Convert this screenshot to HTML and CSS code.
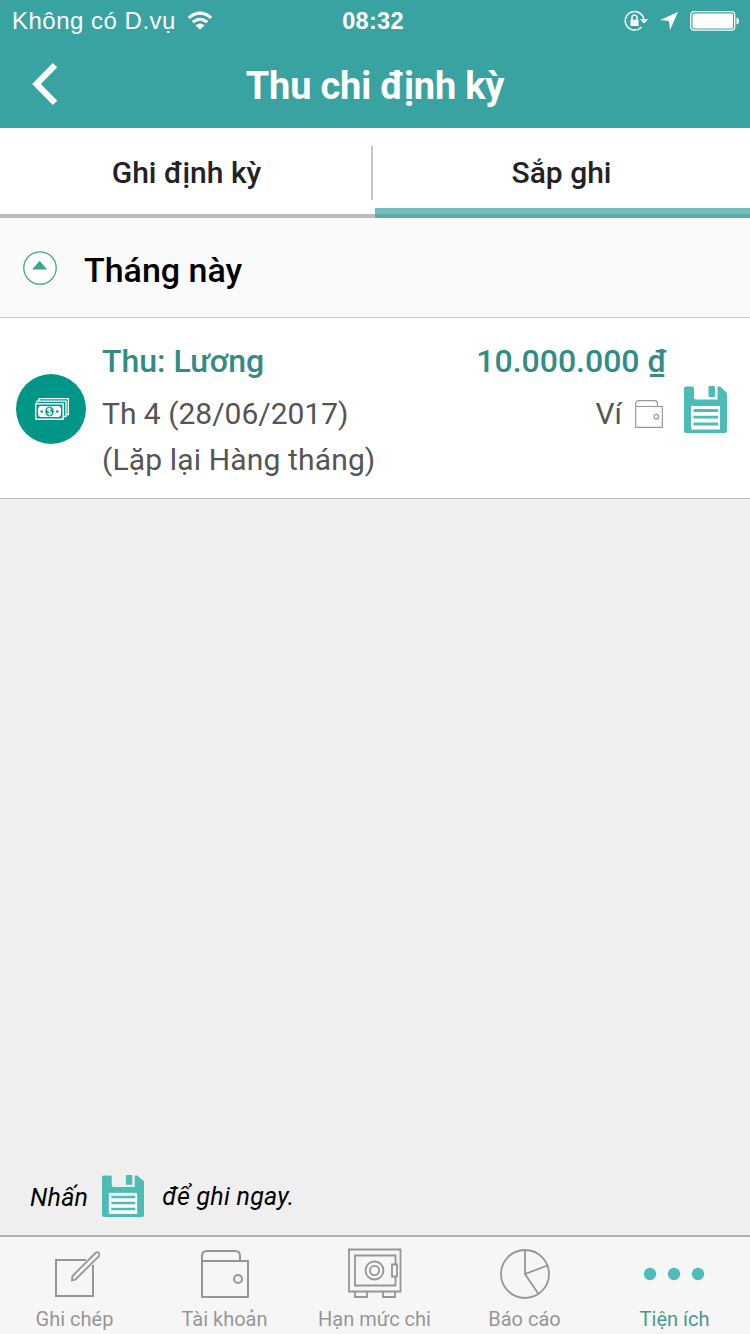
FILE: index.html
```html
<!DOCTYPE html>
<html lang="vi">
  <head>
    <meta charset="UTF-8" />
    <meta name="viewport" content="width=device-width, initial-scale=1.0" />
    <title>Thu chi định kỳ</title>
    <link rel="stylesheet" href="styles.css">
  </head>
  <body>
    <svg class="defs" width="0" height="0">
      <symbol id="floppy" viewBox="0 0 43 47">
        <path fill="#4dbcb7" d="M2 0.500H8.500Q10 0.500 10 2V11.500Q10 13.500 12 13.500H33.500V0.500H36L43 7V45Q43 47 41 47H2Q0 47 0 45V2.500Q0 0.500 2 0.500Z" />
        <rect fill="#4dbcb7" x="24.500" y="0" width="6.500" height="11" rx="1" />
        <path fill="#fff" d="M7 20H36V43.500H7Z" />
        <path stroke="#4dbcb7" stroke-width="2.800" d="M9.500 24.500H34M9.500 31.200H34M9.500 38H34" />
      </symbol>
    </svg>

    <header>
      <div class="status">
        <div class="carrier">
          <span class="carrier-name">Không có D.vụ</span>
          <svg width="26" height="20" viewBox="0 0 26 20" fill="none" stroke="#fff">
            <path stroke-width="3" d="M1.800 6.800Q13 -2.600 24.200 6.800" />
            <path stroke-width="3" d="M5.800 11.200Q13 5.200 20.200 11.200" />
            <path fill="#fff" stroke="none" d="M8.500 14.200Q13 10.600 17.500 14.200L13 18.800Z" />
          </svg>
        </div>
        <span class="time">08:32</span>
        <div class="status-icons">
          <svg width="24" height="22" viewBox="0 0 24 22" fill="none" stroke="#fff">
            <path stroke-width="1.500" d="M19.800 9.500A9.300 9.300 0 1 0 17.500 17" />
            <path fill="#fff" stroke="none" d="M16 9.200H24L20 13.500ZM6.500 9.800H14.500V16H6.500Z" />
            <path stroke-width="1.500" d="M8 10V7.500A2.500 2.500 0 0 1 13 7.500V10" />
          </svg>
          <svg width="18" height="18" viewBox="0 0 18 18">
            <path fill="#fff" d="M18 0L10 18L9 9L0 8Z" />
          </svg>
          <svg width="50" height="20" viewBox="0 0 50 20">
            <rect x=".7" y=".7" width="44" height="18.400" rx="3" fill="none" stroke="#fff" stroke-width="1.300" />
            <rect x="2.500" y="2.500" width="40.500" height="15" rx="1.500" fill="#fff" />
            <path fill="#fff" d="M46.500 6.500Q49 7 49 10T46.500 13.500Z" />
          </svg>
        </div>
      </div>
      <div class="nav">
        <svg class="back" width="26" height="42" viewBox="0 0 26 42">
          <path fill="none" stroke="#fff" stroke-width="6.200" d="M23 2.200L4.500 21L23 39.800" />
        </svg>
        <h1>Thu chi định kỳ</h1>
      </div>
    </header>

    <div class="tabs">
      <div class="tab">
        <span class="tab-left">Ghi định kỳ</span>
        <span class="divider"></span>
      </div>
      <div class="tab active"><span>Sắp ghi</span></div>
    </div>

    <div class="section">
      <svg width="34" height="34" viewBox="0 0 34 34">
        <circle cx="17" cy="17" r="16.200" fill="#fff" stroke="#45a68a" stroke-width="1.300" />
        <path fill="#3ea58a" d="M16.600 9.800L24.200 18.500H9.200Z" />
      </svg>
      <h2>Tháng này</h2>
    </div>

    <div class="item">
      <div class="badge">
        <svg width="34" height="22" viewBox="0 0 34 22" fill="none" stroke="#fff">
          <path stroke-width="1.300" d="M4 2.700V.7H33.300V16.500H31M2 4.800V3.200H31V18.500H28.500" />
          <path stroke-width="1.500" d="M.7 5.800H28.200V21.200H.7Z" />
          <path fill="#fff" stroke="none" d="M3 8H26V19H3Z" />
          <path stroke="#009788" stroke-width="1.200" d="M3 10V8H5M24 8H26V10M26 17V19H24M5 19H3V17" />
          <ellipse cx="14.500" cy="13.500" rx="4.200" ry="5" fill="#009788" stroke="none" />
          <path stroke-width="1.200" d="M16.500 11.500Q12.500 9.500 12.700 12Q13 13 14.500 13.400Q16.800 14 16.300 15.500Q15 17 12.400 15.300M14.500 9.500V17.500" />
          <circle cx="6.700" cy="13.500" r="1.300" fill="#009788" stroke="none" />
          <circle cx="22.300" cy="13.500" r="1.300" fill="#009788" stroke="none" />
        </svg>
      </div>
      <div class="detail">
        <div class="line line1">
          <span>Thu: Lương</span>
          <span>10.000.000 ₫</span>
        </div>
        <div class="line line2">
          <span>Th 4 (28/06/2017)</span>
          <span class="wallet">
            <span>Ví</span>
            <svg width="28" height="28" viewBox="0 0 28 28" fill="none" stroke="#999" stroke-width="1.200">
              <path d="M.7 6.500H27.300V27.300H.7V4Q.7 .7 4 .7H19.500Q22.500 .7 22.500 3.500V6.500" />
              <circle cx="21.300" cy="16.800" r="2.400" />
            </svg>
          </span>
        </div>
        <div class="line line3"><span>(Lặp lại Hàng tháng)</span></div>
      </div>
      <svg class="save" width="43" height="47"><use href="#floppy" /></svg>
    </div>

    <div class="note">
      <span class="note-start">Nhấn</span>
      <svg width="42" height="42" viewBox="0 0 43 47" preserveAspectRatio="none"><use href="#floppy" width="43" height="47" /></svg>
      <span>để ghi ngay.</span>
    </div>

    <div class="menu">
      <div class="menu-item">
        <svg width="50" height="52" viewBox="0 0 50 52" fill="none" stroke="#969696" stroke-width="2">
          <path d="M36 12H6V48H43V17" />
          <path stroke-width="1.800" d="M22.500 28L45.500 5Q47.500 3.200 49 5Q50 6.800 48.700 8.300L25.500 31.500L22 32.500Z" />
        </svg>
        <span>Ghi chép</span>
      </div>
      <div class="menu-item">
        <svg width="50" height="52" viewBox="0 0 50 52" fill="none" stroke="#969696" stroke-width="2">
          <path d="M2 13H48V49H2V8Q2 3 7 3H35Q40 3 40 8V13" stroke-linejoin="round" />
          <circle cx="38" cy="31" r="4" />
        </svg>
        <span>Tài khoản</span>
      </div>
      <div class="menu-item">
        <svg width="54" height="52" viewBox="0 0 54 52" fill="none" stroke="#969696" stroke-width="1.800">
          <path d="M1 1.500H52.500V43.500H1ZM47.500 16V7.500H7V37.500H47.500V28.500M44 16.500H49V28.500H44ZM7 43.500V49H19V43.500M35 43.500V49H47V43.500" />
          <circle cx="26.500" cy="22.500" r="9" />
          <circle cx="26.500" cy="22.500" r="4.600" />
        </svg>
        <span>Hạn mức chi</span>
      </div>
      <div class="menu-item">
        <svg width="50" height="52" viewBox="0 0 50 52" fill="none" stroke="#969696" stroke-width="1.800">
          <circle cx="25" cy="26" r="24" />
          <path d="M25 2V26L47.500 17.500M25 26L38.500 46" />
        </svg>
        <span>Báo cáo</span>
      </div>
      <div class="menu-item active">
        <svg width="62" height="52" viewBox="0 0 62 52" fill="#4fbcb8">
          <circle cx="6" cy="26" r="6.200" />
          <circle cx="30" cy="26" r="6.200" />
          <circle cx="54" cy="26" r="6.200" />
        </svg>
        <span>Tiện ích</span>
      </div>
    </div>
  </body>
</html>
```

FILE: styles.css
```css
* {
  box-sizing: border-box;
}

body {
  margin: 0;
  width: 750px;
  height: 1334px;
  display: flex;
  flex-direction: column;
  font-family: Roboto, sans-serif;
  background-color: #efefef;
  white-space: nowrap;
  overflow: hidden;
}

svg {
  display: block;
  flex-shrink: 0;
}

.defs {
  position: absolute;
}

header {
  height: 128px;
  color: #fff;
  background-color: #38a3a0;
}

.status {
  height: 41px;
  padding: 0 10px 0 12px;
  display: grid;
  grid-template-columns: 1fr auto 1fr;
  align-items: center;
  font-family: "Liberation Sans", sans-serif;
  font-size: 24px;
}

.carrier {
  display: flex;
  align-items: center;
  gap: 11px;
}

.carrier-name {
  padding-top: 1px;
  letter-spacing: 0.5px;
}

.time {
  padding-top: 1px;
  margin-right: 6px;
  font-size: 23.5px;
  font-weight: bold;
  letter-spacing: 0.3px;
}

.status-icons {
  display: flex;
  justify-content: flex-end;
  align-items: center;
  gap: 12px;
}

.nav {
  height: 87px;
  padding: 3px 32px 0;
  display: grid;
  grid-template-columns: 1fr auto 1fr;
  align-items: center;
}

.back {
  margin-top: -4px;
}

h1 {
  margin: 0;
  font-size: 38px;
  font-weight: bold;
  letter-spacing: -0.2px;
}

.tabs {
  height: 90px;
  display: flex;
  background-color: #fff;
}

.tab {
  width: 375px;
  padding-top: 3px;
  display: flex;
  align-items: center;
  justify-content: center;
  font-size: 30px;
  font-weight: 500;
  color: #222327;
  border-bottom: 4px solid #bbbac0;
}

.tab-left {
  flex: 1;
  padding-left: 2px;
  text-align: center;
}

.divider {
  width: 2px;
  height: 54px;
  margin-right: 2px;
  background-color: #c5c5c7;
}

.tabs .active {
  padding-right: 2px;
  border-bottom: 4px solid #5eaaab;
  box-shadow: inset 0 -6px #72bdbc;
}

.section {
  height: 100px;
  padding-left: 23px;
  display: flex;
  align-items: center;
  gap: 27px;
  background-color: #fafafa;
  border-bottom: 1px solid #c8c7cc;
}

h2 {
  margin: 5px 0 0;
  font-size: 34px;
  font-weight: 500;
}

.item {
  height: 181px;
  padding: 18px 23px 0 16px;
  display: flex;
  background-color: #fff;
  border-bottom: 1px solid #c0c0c0;
}

.badge {
  width: 70px;
  height: 70px;
  margin: 38px 16px 0 0;
  padding-left: 2px;
  border-radius: 50%;
  display: flex;
  align-items: center;
  justify-content: center;
  background-color: #009788;
}

.detail {
  width: 564px;
}

.line {
  display: flex;
  align-items: center;
  justify-content: space-between;
  font-size: 30px;
  color: #555;
}

.line1 {
  height: 50px;
  font-size: 32px;
  font-weight: 500;
  color: #338b86;
}

.line2 {
  height: 55px;
}

.line3 {
  height: 36px;
  letter-spacing: 0.15px;
}

.wallet {
  padding-right: 3px;
  display: flex;
  align-items: center;
  gap: 13px;
}

.save {
  margin: 50px 0 0 18px;
}

.note {
  margin-top: auto;
  height: 76px;
  padding: 0 0 2px 30px;
  display: flex;
  align-items: center;
  font-size: 25px;
  font-style: italic;
  letter-spacing: 0.25px;
  color: #000;
}

.note-start {
  padding-top: 3px;
}

.note svg {
  margin: 0 18px 0 14px;
}

.menu {
  height: 99px;
  padding-top: 11px;
  display: flex;
  background-color: #f6f6f6;
  border-top: 2px solid #b0b0b0;
}

.menu-item {
  width: 150px;
  padding-right: 1px;
  display: flex;
  flex-direction: column;
  align-items: center;
  font-size: 20px;
  line-height: 38px;
  color: #969696;
}

.menu .active {
  color: #459a93;
}
```
